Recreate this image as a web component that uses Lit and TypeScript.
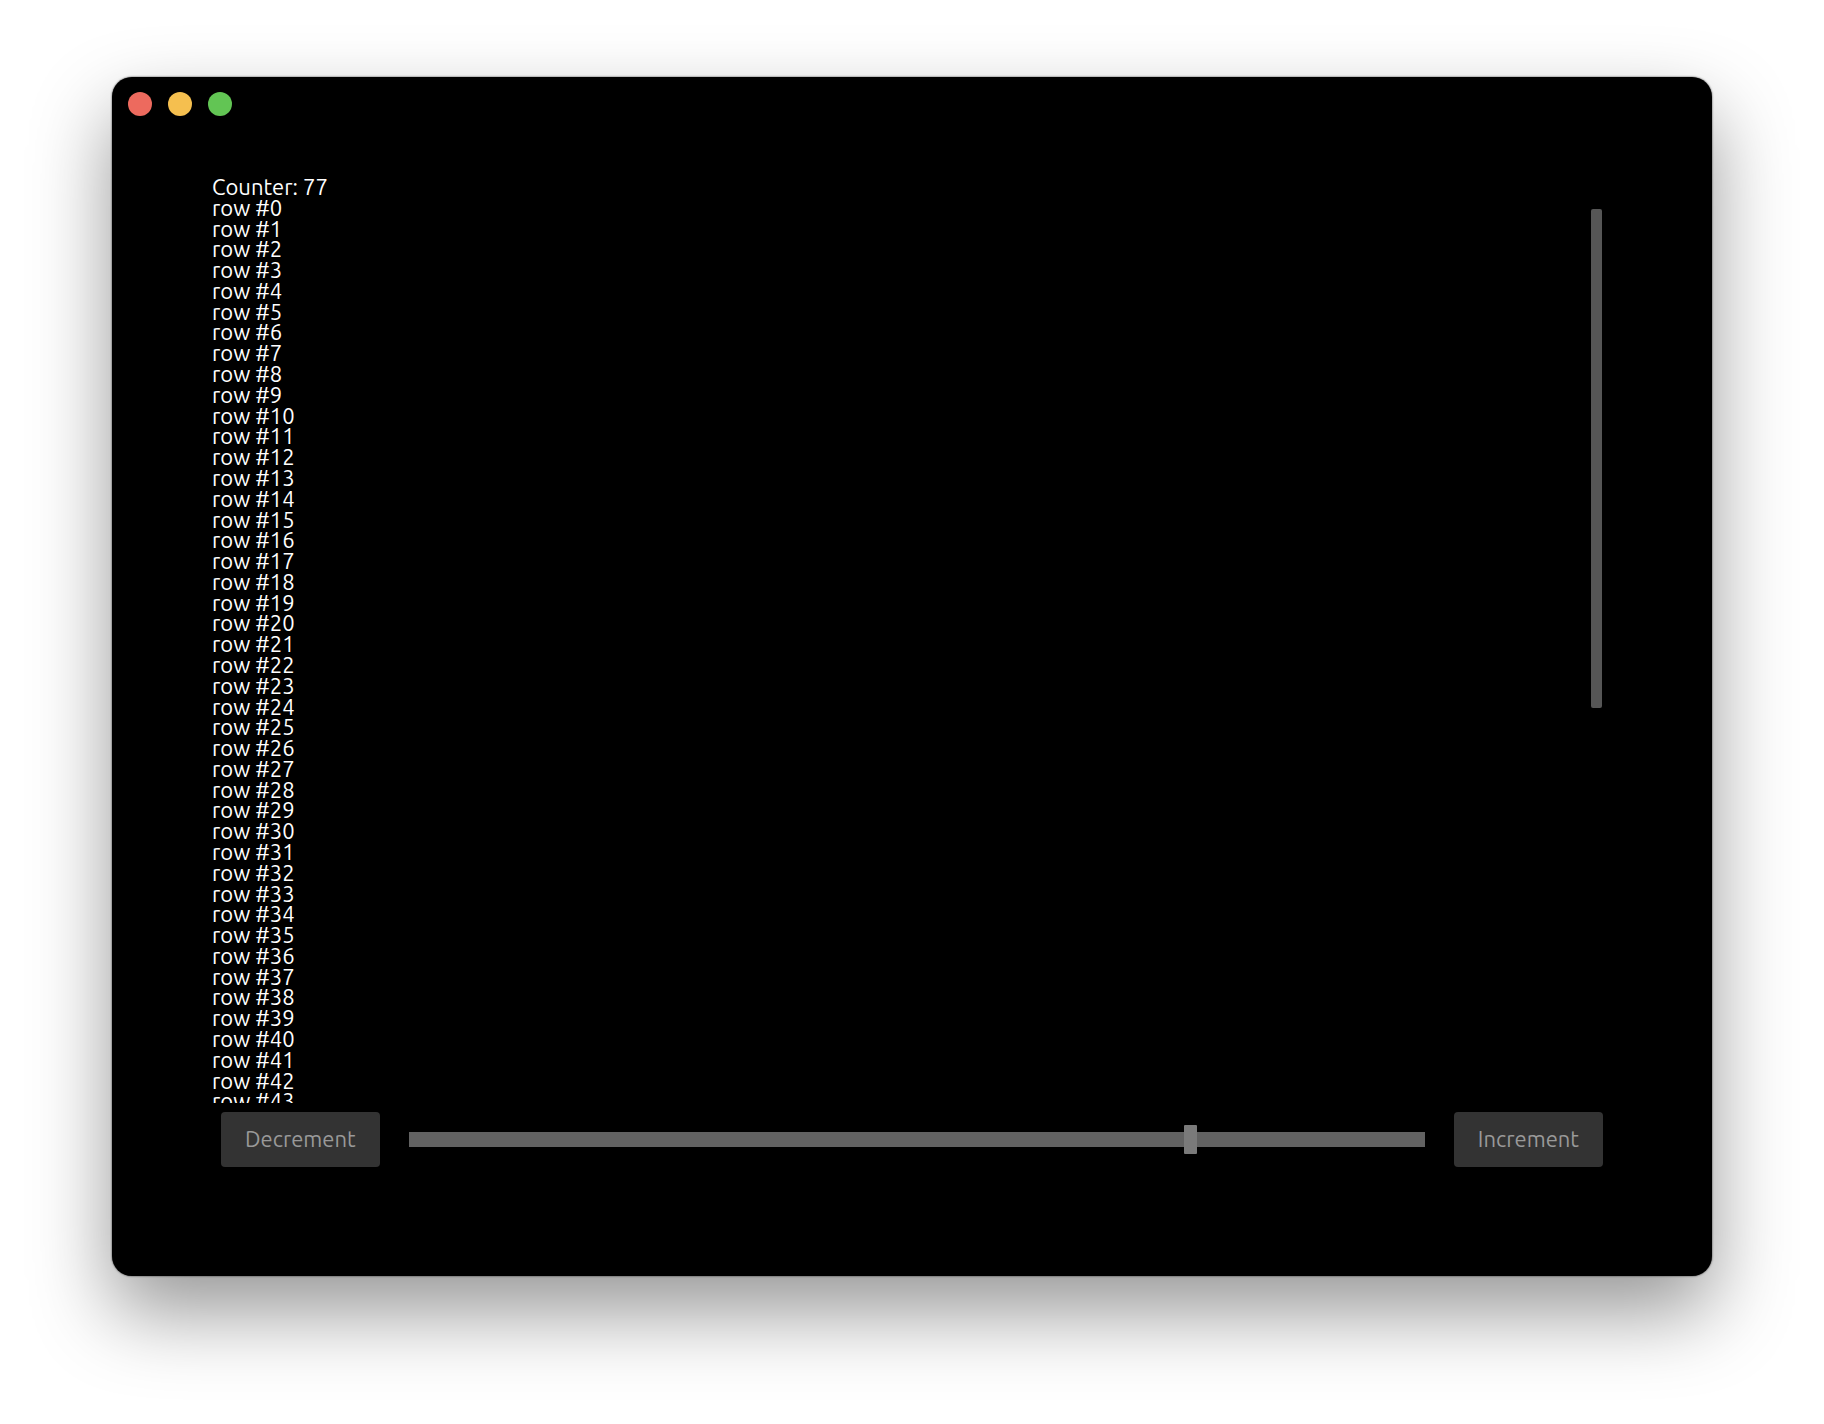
import { LitElement, html, css } from "lit";
import { customElement, state, query } from "lit/decorators.js";

@customElement("row-list")
export class RowList extends LitElement {
  static properties = { count: { type: Number } };
  declare count: number;

  @state() private height = 0;
  @state() private scrolled = 0;
  @state() private rowHeight = 0;
  @query(".viewport") private viewport!: HTMLElement;

  private observer?: ResizeObserver;

  static styles = css`
    :host {
      display: flex;
      flex: 1;
      min-height: 0;
      position: relative;
    }
    .viewport {
      flex: 1;
      overflow-y: auto;
      scrollbar-width: none;
    }
    .rows {
      box-sizing: border-box;
      list-style: none;
      margin: 0;
      padding: 0;
    }
    .rail {
      position: absolute;
      top: 11px;
      right: 10px;
      bottom: 11px;
      width: 11px;
      pointer-events: none;
    }
    .thumb {
      position: relative;
      border-radius: 2px;
      background: #565656;
    }
  `;

  constructor() {
    super();
    this.count = 0;
  }

  firstUpdated() {
    this.observer = new ResizeObserver(() => this.measure());
    this.observer.observe(this.viewport);
    this.measure();
  }

  disconnectedCallback() {
    super.disconnectedCallback();
    this.observer?.disconnect();
  }

  private measure() {
    this.rowHeight = parseFloat(getComputedStyle(this).lineHeight);
    this.height = this.viewport.clientHeight;
    this.scrolled = this.viewport.scrollTop;
  }

  // Only the rows inside the viewport are rendered; padding stands in for the ones above.
  render() {
    const rh = this.rowHeight || 1;
    const total = Math.max(this.count * rh, 1);
    const first = Math.min(this.count, Math.floor(this.scrolled / rh));
    const last = Math.min(this.count, Math.ceil((this.scrolled + this.height) / rh));
    const rows = Array.from({ length: last - first }, (_, i) => first + i);
    const ratio = Math.min(1, this.height / total);
    return html`
      <div class="viewport" @scroll=${this.measure}>
        <ul class="rows" style="height:${total}px;padding-top:${first * rh}px">
          ${rows.map((i) => html`<li>row #${i}</li>`)}
        </ul>
      </div>
      <div class="rail" ?hidden=${ratio >= 1}>
        <div
          class="thumb"
          style="height:${ratio * 100}%;top:${(this.scrolled / total) * 100}%"
        ></div>
      </div>
    `;
  }
}

@customElement("app-root")
export class AppRoot extends LitElement {
  @state() private counter = 77;

  static styles = css`
    :host {
      display: flex;
      box-sizing: border-box;
      height: 100vh;
      padding: 77px 112px 148px;
      background: #fff;
      font-family: Ubuntu, "Noto Sans", "Open Sans", sans-serif;
      font-size: 22px;
      line-height: 0.945;
      color: #fff;
    }
    .window {
      flex: 1;
      display: flex;
      flex-direction: column;
      min-width: 0;
      border-radius: 20px;
      background: #000;
      box-shadow:
        0 0 2px rgba(0, 0, 0, 0.8),
        0 36px 80px rgba(0, 0, 0, 0.41);
    }
    .titlebar {
      box-sizing: border-box;
      display: flex;
      gap: 16px;
      height: 100px;
      padding: 15px 16px;
    }
    .light {
      width: 24px;
      height: 24px;
      padding: 0;
      border: 0;
      border-radius: 50%;
    }
    .close {
      background: #ed6a5e;
    }
    .minimize {
      background: #f5bf4f;
    }
    .zoom {
      background: #62c554;
    }
    .content {
      flex: 1;
      display: flex;
      flex-direction: column;
      min-height: 0;
      padding: 0 100px 100px;
    }
    .counter {
      display: block;
    }
    .controls {
      display: flex;
      align-items: center;
      gap: 29px;
      padding: 9px;
    }
    .action {
      height: 55px;
      padding: 0 24px;
      border: 0;
      border-radius: 4px;
      background: #333;
      color: #999;
      font: inherit;
    }
    .track {
      flex: 1;
      display: flex;
      height: 15px;
      align-items: center;
      background: #626262;
    }
    .slider {
      flex: 1;
      min-width: 0;
      height: 29px;
      margin: 0 -6px;
      appearance: none;
      background: transparent;
    }
    .slider::-webkit-slider-thumb {
      appearance: none;
      width: 13px;
      height: 29px;
      border-radius: 1px;
      background: #7a7a7a;
    }
  `;

  private step(delta: number) {
    this.counter = Math.min(100, Math.max(0, this.counter + delta));
  }

  private slide(e: Event) {
    this.counter = Number((e.target as HTMLInputElement).value);
  }

  render() {
    return html`
      <main class="window">
        <header class="titlebar">
          <button class="light close" aria-label="Close"></button>
          <button class="light minimize" aria-label="Minimize"></button>
          <button class="light zoom" aria-label="Zoom"></button>
        </header>
        <section class="content">
          <output class="counter">Counter: ${this.counter}</output>
          <row-list .count=${this.counter}></row-list>
          <div class="controls">
            <button class="action" @click=${() => this.step(-1)}>Decrement</button>
            <div class="track">
              <input
                class="slider"
                type="range"
                min="0"
                max="100"
                aria-label="Counter"
                .value=${String(this.counter)}
                @input=${this.slide}
              />
            </div>
            <button class="action" @click=${() => this.step(1)}>Increment</button>
          </div>
        </section>
      </main>
    `;
  }
}
